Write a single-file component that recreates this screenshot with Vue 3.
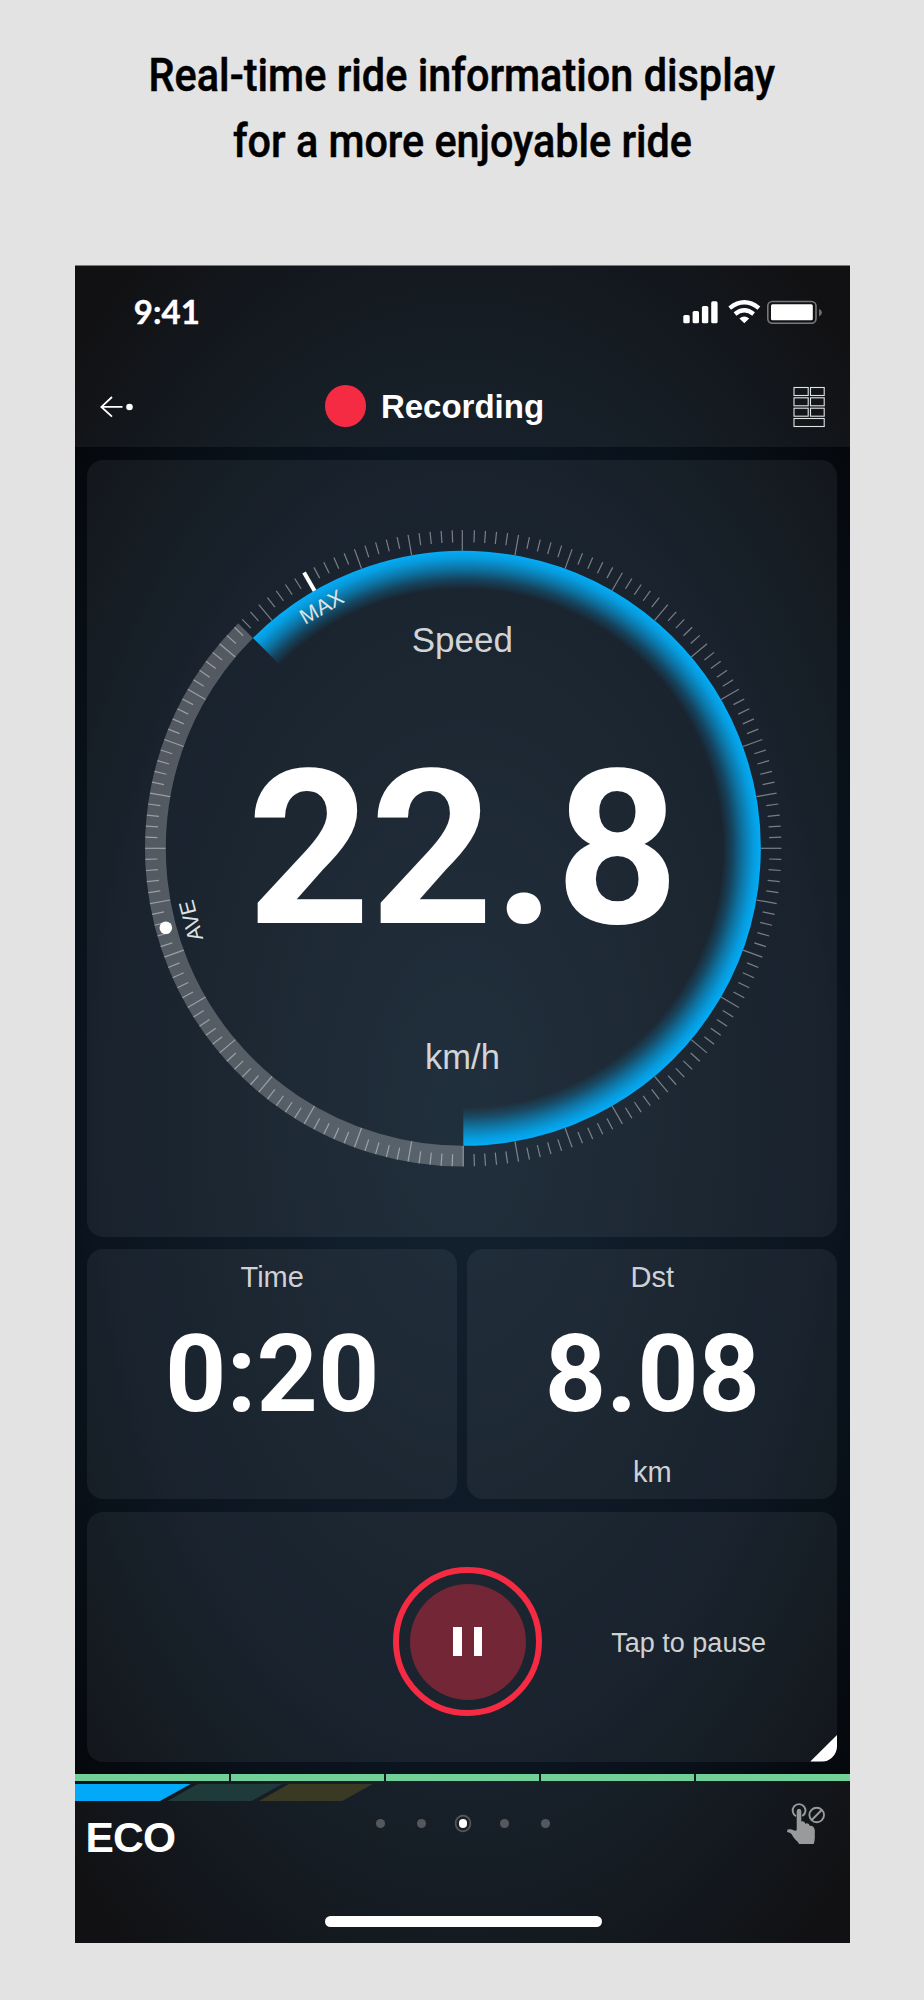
<script setup>
const CX = 463.3
const CY = 848.3

// Angles are degrees clockwise from twelve o'clock.
const point = (deg, r) => {
  const a = (deg * Math.PI) / 180
  return [CX + r * Math.sin(a), CY - r * Math.cos(a)]
}

const ticks = []
for (let i = 0; i < 180; i++) {
  const deg = i * 2
  if (deg === 330) continue
  const major = deg % 10 === 0
  const [x1, y1] = point(deg, 318.2)
  const [x2, y2] = point(deg, major ? 297.6 : 306)
  const dx = deg === 0 ? -1 : 0
  ticks.push({ x1: x1 + dx, y1, x2: x2 + dx, y2 })
}

const arc = (from, to, r, large, sweep) =>
  `M${point(from, r).join(' ')}A${r} ${r} 0 ${large} ${sweep} ${point(to, r).join(' ')}`

const restArc = arc(180, 315, 307.9, 0, 1)
const speedArc = arc(180, 315, 278, 1, 0)
const [mx1, my1] = point(330, 318.5)
const [mx2, my2] = point(330, 297.5)
const pages = [0, 1, 2, 3, 4]
</script>

<template>
  <div class="page">
    <svg class="headline" width="924" height="265" viewBox="0 0 924 265">
      <text x="148.5" y="90.5" textLength="626.5" lengthAdjust="spacingAndGlyphs">Real-time ride information display</text>
      <text x="233" y="156.5" textLength="459" lengthAdjust="spacingAndGlyphs">for a more enjoyable ride</text>
    </svg>

    <main class="phone">
      <header class="top">
        <div class="status">
          <svg class="clock" width="90" height="60" viewBox="-10 -10 90 60">
            <text x="2.8" y="31.5" textLength="66" lengthAdjust="spacingAndGlyphs">9:41</text>
          </svg>
          <svg class="signals" width="140" height="26" viewBox="683 299 140 26">
            <g fill="#fff">
              <rect x="683.3" y="315" width="6.4" height="8.3" rx="1.6" />
              <rect x="692.6" y="311" width="6.4" height="12.3" rx="1.6" />
              <rect x="701.9" y="306" width="6.4" height="17.3" rx="1.6" />
              <rect x="711.2" y="301.3" width="6.4" height="22" rx="1.6" />
              <path d="M744.3 323.2l-4.9-4.8q4.9-4 9.8 0l-4.900 4.800z" />
            </g>
            <g fill="none" stroke="#fff" stroke-width="4.3">
              <path d="M729.7 308.1q14.6-11.6 29.2 0" />
              <path d="M735 314q9.3-7.6 18.6 0" />
            </g>
            <rect x="767.8" y="301.5" width="48.2" height="21.8" rx="4.5" fill="none" stroke="#77797b" stroke-width="1.6" />
            <rect x="771" y="304.3" width="41.8" height="16" rx="1.5" fill="#fff" />
            <path d="M819 308.7q3 1.500 3 3.800t-3 3.800z" fill="#6b6d6f" />
          </svg>
        </div>
        <div class="title-row">
          <svg class="back" width="33" height="22" viewBox="100 396 33 22">
            <path d="M122.5 406.9H101.2M112 397L101.4 406.900L112 416.600" fill="none" stroke="#fff" stroke-width="1.8" />
            <circle cx="129.5" cy="407" r="3.3" fill="#fff" />
          </svg>
          <div class="recording">
            <span class="rec-dot"></span>
            <h1>Recording</h1>
          </div>
          <svg class="layout-icon" width="32" height="42" viewBox="793.5 386 32 42">
            <g fill="none" stroke="#e2e2e2" stroke-width="1.1">
              <template v-for="y in [387.5, 397.8, 408.2]" :key="y">
                <rect x="794.5" :y="y" width="14.2" height="8" />
                <rect x="811" :y="y" width="13.7" height="8" />
              </template>
              <rect x="794.5" y="418.5" width="30.2" height="8" />
            </g>
          </svg>
        </div>
      </header>

      <section class="board">
        <div class="card">
          <svg class="dial" width="750" height="777" viewBox="87 460 750 777">
            <defs>
              <radialGradient id="glow" gradientUnits="userSpaceOnUse" :cx="CX" :cy="CY" r="297.5">
                <stop offset="0.872" stop-color="#04a8f0" stop-opacity="0" />
                <stop offset="0.905" stop-color="#04a8f0" stop-opacity="0.24" />
                <stop offset="0.940" stop-color="#04a8f0" stop-opacity="0.6" />
                <stop offset="0.975" stop-color="#04a8f0" stop-opacity="0.9" />
                <stop offset="1" stop-color="#04acf6" />
              </radialGradient>
            </defs>
            <path :d="restArc" fill="none" stroke="#fff" stroke-opacity="0.25" stroke-width="20.8" />
            <line
              v-for="(t, i) in ticks" :key="i"
              :x1="t.x1" :y1="t.y1" :x2="t.x2" :y2="t.y2"
              stroke="#fff" stroke-opacity="0.42" stroke-width="1.2"
            />
            <path :d="speedArc" fill="none" stroke="url(#glow)" stroke-width="39" />
            <line :x1="mx1" :y1="my1" :x2="mx2" :y2="my2" stroke="#fff" stroke-width="4" />
            <circle cx="165.8" cy="927.7" r="6.3" fill="#fff" />
            <text class="mark" transform="translate(325.3 613.3) rotate(-30)">MAX</text>
            <text class="mark" transform="translate(198 918.800) rotate(-104.5)">AVE</text>
            <text class="caption" x="462.3" y="651.7" font-size="35">Speed</text>
            <text class="speed" x="463" y="922.8">22.8</text>
            <text class="caption" x="462.5" y="1069.3" font-size="34.5">km/h</text>
          </svg>
        </div>

        <div class="pair">
          <div class="card stat">
            <span class="label">Time</span>
            <strong>0:20</strong>
          </div>
          <div class="card stat">
            <span class="label">Dst</span>
            <strong>8.08</strong>
            <span class="label">km</span>
          </div>
        </div>

        <div class="card control">
          <div class="pause"><span class="disk"><i></i><i></i></span></div>
          <span class="hint">Tap to pause</span>
          <span class="fold"></span>
        </div>
      </section>

      <footer class="bottom">
        <div class="segments"><span v-for="n in 5" :key="n"></span></div>
        <svg class="modes" width="300" height="17" viewBox="75 1784 300 17">
          <path d="M75 1784H190.7L160 1801H75z" fill="#02a9f8" />
          <path d="M197.5 1784H282L251.7 1801H167.5z" fill="#1f3a3b" />
          <path d="M288.7 1784H372.7L342.3 1801H259z" fill="#3a3a24" />
        </svg>
        <div class="foot-row">
          <span class="mode">ECO</span>
          <div class="pager"><span v-for="p in pages" :key="p" :class="{ active: p === 2 }"></span></div>
          <svg class="touch" width="40" height="44" viewBox="786 1801 40 44">
            <g fill="none" stroke="#999a9b" stroke-width="1.9">
              <path d="M796 1816.1A6.4 6.4 0 1 1 802.3 1816" />
              <circle cx="816.7" cy="1815" r="7.3" />
              <path d="M811.7 1820L821.7 1810" />
            </g>
            <path d="M796.7 1811.3q0-2.500 2.300-2.500t2.300 2.500v10.200q1-.6 2.200-.1 1.500.5 1.700 2.300 1.700-.8 3.200 0 1.200.8 1.300 2.200 4-.6 5.100 4.200v7.500q0 3.500-1.100 6.400h-14.600q-1-2.500-3.600-4.300-2.200-1.800-3.600-5.200-1-1.700-4.700-2.600-.6-2.400 1.800-2.700 2.800-.3 4.700 1 1.800 1 3-.2z" fill="#999a9b" />
          </svg>
        </div>
        <div class="home"></div>
      </footer>
    </main>
  </div>
</template>

<style>
html,
body {
  background: #e3e3e3;
}
</style>

<style scoped>
.page {
  width: 924px;
  height: 2000px;
  background: #e3e3e3;
  font-family: "Liberation Sans", Arial, sans-serif;
  overflow: hidden;
}
svg {
  display: block;
  flex: none;
}
.headline text {
  font: 500 46.5px Roboto, sans-serif;
  fill: #000;
  stroke: #000;
  stroke-width: 0.5px;
}
.phone {
  width: 774.6px;
  height: 1678px;
  margin-left: 75px;
  display: flex;
  flex-direction: column;
  background: radial-gradient(ellipse 560px 1000px at 388px 845px, #142331 0%, #0b1520 65%, #070d14 84%, #040406 103%);
  box-shadow: inset 0 1px 0 #6e7374;
}
.top {
  height: 182px;
  background: rgba(255, 255, 255, 0.055);
}
.status {
  height: 94px;
  display: flex;
  align-items: center;
}
.clock {
  margin-left: 46px;
}
.clock text {
  font: 700 33px Lato, sans-serif;
  fill: #fff;
  stroke: #fff;
  stroke-width: 0.4px;
}
.signals {
  margin-left: 472px;
}
.title-row {
  height: 88px;
  padding-top: 6px;
  box-sizing: border-box;
  display: flex;
  align-items: center;
}
.back {
  margin-left: 25px;
  margin-top: 2px;
}
.recording {
  margin-left: 191.8px;
  display: flex;
  align-items: center;
  gap: 14.5px;
}
.rec-dot {
  width: 41.6px;
  height: 41.6px;
  border-radius: 50%;
  background: #f52a43;
}
h1 {
  margin: 2px 0 0;
  font-size: 33px;
  line-height: 40px;
  font-weight: 700;
  color: #fff;
}
.layout-icon {
  margin-top: 2px;
  margin-left: auto;
  margin-right: 25px;
}
.board {
  height: 1326.5px;
  padding: 13px 12.3px 0 12.3px;
  box-sizing: border-box;
}
.card {
  border-radius: 16px;
  background: rgba(255, 255, 255, 0.058);
}
.caption {
  fill: #d2d4d7;
  text-anchor: middle;
}
.mark {
  fill: #dfe3e6;
  font-size: 21.5px;
  text-anchor: middle;
}
.speed {
  font: 700 214.5px Roboto, sans-serif;
  fill: #fff;
  text-anchor: middle;
}
.pair {
  margin-top: 12px;
  display: grid;
  grid-template-columns: 1fr 1fr;
  gap: 10.3px;
}
.stat {
  height: 250px;
  padding-top: 10.5px;
  box-sizing: border-box;
  display: flex;
  flex-direction: column;
  align-items: center;
}
.label {
  font-size: 29px;
  line-height: 34px;
  color: #cfd1d4;
}
.stat strong {
  font: 700 107px/130px Roboto, sans-serif;
  color: #fff;
  margin: 16.5px 0 15px;
}
.control {
  position: relative;
  height: 250px;
  margin-top: 12.6px;
  display: flex;
  align-items: center;
  padding-top: 10px;
  box-sizing: border-box;
  overflow: hidden;
}
.pause {
  width: 149px;
  height: 149px;
  margin-left: 306px;
  box-sizing: border-box;
  border: 6.5px solid #f52a43;
  border-radius: 50%;
  display: grid;
  place-items: center;
}
.disk {
  width: 116px;
  height: 116px;
  border-radius: 50%;
  background: #722636;
  display: flex;
  justify-content: center;
  align-items: center;
  gap: 12px;
}
.disk i {
  width: 8.6px;
  height: 29px;
  background: #fff;
}
.hint {
  margin-left: 69px;
  margin-top: 2px;
  font-size: 27px;
  line-height: 32px;
  color: #cfd1d3;
}
.fold {
  position: absolute;
  right: 0;
  bottom: 0;
  width: 27px;
  height: 27px;
  background: #fff;
  clip-path: polygon(100% 0, 100% 100%, 0 100%);
}
.bottom {
  flex: 1;
  background: rgba(255, 255, 255, 0.055);
}
.segments {
  display: grid;
  grid-template-columns: 153.5px 153px 153px 153px 1fr;
  gap: 2px;
  height: 7px;
  background: #101a22;
}
.segments span {
  background: #70d098;
}
.modes {
  margin-top: 3.5px;
}
.foot-row {
  height: 75px;
  display: flex;
  align-items: flex-start;
}
.mode {
  width: 200px;
  margin-left: 10.5px;
  margin-top: 12px;
  font-size: 42.5px;
  line-height: 50px;
  letter-spacing: -0.8px;
  font-weight: 700;
  color: #fff;
}
.pager {
  margin-left: 83.5px;
  margin-top: 13.5px;
  width: 188px;
  height: 18px;
  box-sizing: border-box;
  display: flex;
  justify-content: space-between;
  align-items: center;
  padding: 0 7px;
}
.pager span {
  width: 8.7px;
  height: 8.7px;
  border-radius: 50%;
  background: #54585d;
}
.pager .active {
  background: #fff;
  box-shadow: 0 0 0 2.5px #1a222a, 0 0 0 4.2px #54585d;
}
.touch {
  margin-left: auto;
  margin-right: 23.6px;
}
.home {
  width: 277px;
  height: 10.7px;
  margin: 40px 0 0 250px;
  border-radius: 6px;
  background: #fff;
}
</style>
